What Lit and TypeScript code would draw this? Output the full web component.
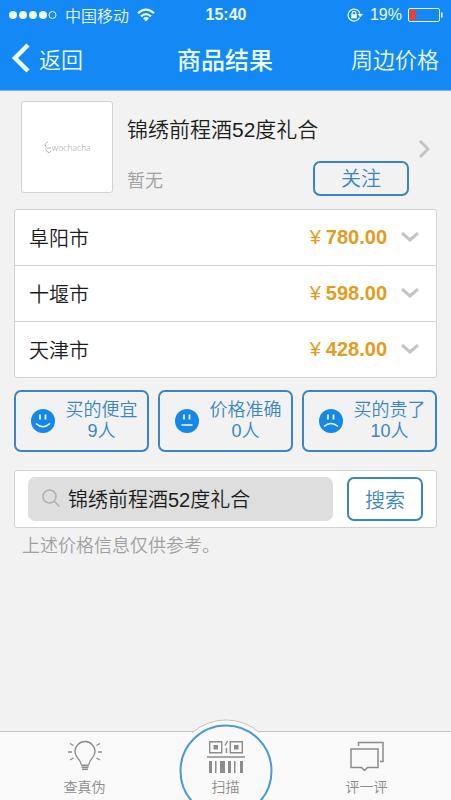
import { LitElement, html, css, svg } from "lit";
import { customElement, state } from "lit/decorators.js";

const prices = [
  { city: "阜阳市", price: "780.00" },
  { city: "十堰市", price: "598.00" },
  { city: "天津市", price: "428.00" },
];

const votes = [
  { label: "买的便宜", count: "9人", mouth: "M5 14.5Q12 21 19 14.5" },
  { label: "价格准确", count: "0人", mouth: "M6.5 16H17.5" },
  { label: "买的贵了", count: "10人", mouth: "M5 17.5Q12 11.5 19 17.5" },
];

@customElement("app-root")
export class AppRoot extends LitElement {
  @state() private query = "锦绣前程酒52度礼合";

  static styles = css`
    :host {
      display: flex;
      flex-direction: column;
      min-height: 100vh;
      overflow: hidden;
      background: #f2f2f2;
      color: #1c1c1c;
      font-family: "Liberation Sans", "Noto Sans CJK SC", sans-serif;
      font-weight: 350;
      --blue: #3a86c4;
      --line: #d2d2d2;
    }
    * { box-sizing: border-box; }
    svg { display: block; flex: none; }
    button, input {
      font: inherit;
      color: inherit;
      margin: 0;
      padding: 0;
      border: 0;
      background: none;
    }
    button { cursor: pointer; }
    h1, h2, p, ul { margin: 0; padding: 0; list-style: none; }

    .top {
      background: #1488f5;
      color: #e9fbff;
      border-bottom: 1px solid #7db4ea;
    }
    .status {
      display: grid;
      grid-template-columns: 1fr auto 1fr;
      align-items: center;
      height: 29px;
      padding: 0 8px 0 9px;
      font-size: 16px;
    }
    .group { display: flex; align-items: center; gap: 8px; }
    .group.end { justify-content: flex-end; gap: 6px; }
    .time { font-weight: 700; }
    .nav {
      display: grid;
      grid-template-columns: 1fr auto 1fr;
      align-items: center;
      height: 61px;
      padding: 0 12px 3px 11px;
    }
    .back {
      display: flex;
      align-items: center;
      gap: 9px;
      font-size: 22px;
      justify-self: start;
    }
    .title { font-size: 24px; font-weight: 500; }
    .near {
      justify-self: end;
      font-size: 22px;
      color: inherit;
      text-decoration: none;
    }

    .product {
      display: flex;
      align-items: center;
      gap: 14px;
      padding: 10px 21px 13px;
    }
    .thumb {
      flex: none;
      align-self: flex-start;
      display: flex;
      align-items: center;
      justify-content: center;
      width: 92px;
      height: 92px;
      border: 1px solid var(--line);
      border-radius: 3px;
      background: #fff;
      color: #a0a0a0;
      font-family: "Lato", sans-serif;
      font-size: 9px;
    }
    .info { flex: 1; padding-top: 14px; }
    .name { font-size: 21px; font-weight: inherit; line-height: 30px; margin-bottom: 16px; }
    .meta {
      display: flex;
      align-items: center;
      justify-content: space-between;
      color: #a0a0a0;
      font-size: 18px;
    }
    .outline {
      flex: none;
      border: 2px solid var(--blue);
      border-radius: 7px;
      color: var(--blue);
      font-size: 20px;
    }
    .follow { width: 96px; height: 35px; line-height: 30px; }
    .product .chev { margin-left: -5px; }

    main { flex: 1; padding: 0 14px; }
    .card {
      background: #fff;
      border: 1px solid var(--line);
      border-radius: 3px;
    }
    .row {
      display: flex;
      align-items: center;
      width: 100%;
      height: 55px;
      padding: 0 17px 0 14px;
      font-size: 20px;
      text-align: left;
    }
    li + li { border-top: 1px solid var(--line); }
    .city { flex: 1; }
    .price {
      display: flex;
      align-items: center;
      gap: 5px;
      margin-right: 14px;
      color: #e29c22;
    }
    .price b { font-weight: 700; }

    .votes {
      display: grid;
      grid-template-columns: repeat(3, 1fr);
      gap: 9px;
      margin: 12px 0 18px;
    }
    .vote {
      display: flex;
      align-items: center;
      gap: 10px;
      height: 62px;
      padding: 0 9px 0 15px;
      font-size: 18px;
      line-height: 21px;
    }
    .vote span { flex: 1; white-space: nowrap; }

    .search { display: flex; gap: 14px; padding: 6px 13px; }
    .field {
      flex: 1;
      display: flex;
      align-items: center;
      gap: 8px;
      min-width: 0;
      height: 44px;
      padding: 0 14px 2px;
      border-radius: 7px;
      background: #dedede;
    }
    .field input { flex: 1; min-width: 0; font-size: 20px; outline: none; }
    .go { width: 76px; height: 44px; }
    .note { padding: 4px 8px; color: #a0a0a0; font-size: 18px; line-height: 28px; }

    .tabs {
      display: grid;
      grid-template-columns: repeat(3, 1fr);
      height: 69px;
      padding: 0 14px;
      border-top: 1px solid #c4c4c4;
      background: #f9f9f9;
      color: #8c8c8c;
      font-size: 14px;
    }
    .tab {
      position: relative;
      display: flex;
      flex-direction: column;
      align-items: center;
      justify-content: space-between;
      padding: 8px 0 3px;
      line-height: 20px;
    }
    .tab > * { position: relative; }
    .tab .ring {
      position: absolute;
      top: -13px;
      left: 50%;
      margin-left: -52px;
    }
  `;

  private down() {
    return svg`<svg width="18" height="12" viewBox="0 0 18 12" fill="none" stroke="#c4c4c4" stroke-width="3"><path d="M1 1L9 8L17 1"/></svg>`;
  }

  render() {
    return html`
      <header class="top">
        <div class="status">
          <div class="group">
            <svg width="48" height="10" viewBox="0 0 48 10" fill="currentColor">
              <circle cx="4" cy="5" r="4" /><circle cx="14" cy="5" r="4" />
              <circle cx="24" cy="5" r="4" /><circle cx="34" cy="5" r="4" />
              <circle cx="43.5" cy="5" r="3.5" fill="none" stroke="currentColor" />
            </svg>
            <span>中国移动</span>
            <svg width="18" height="14" viewBox="0 0 18 14" fill="none" stroke="currentColor" stroke-width="2.2">
              <path d="M1 5.2Q9-2 17 5.2M4 8.4Q9 4 14 8.4" />
              <path d="M6 10.2Q9 8 12 10.2L9 13.5Z" fill="currentColor" stroke="none" />
            </svg>
          </div>
          <span class="time">15:40</span>
          <div class="group end">
            <svg width="17" height="14" viewBox="0 0 17 14" fill="none" stroke="currentColor" stroke-width="1.2">
              <path d="M12.6 9.5A6 6 0 1 1 13 6" />
              <path d="M10.6 6H16L13.3 9.2Z" fill="currentColor" stroke="none" />
              <rect x="4.2" y="6.2" width="5.6" height="4.2" fill="currentColor" stroke="none" />
              <path d="M5.2 6.5V5.2a1.8 1.8 0 0 1 3.6 0V6.5" />
            </svg>
            <span>19%</span>
            <svg width="35" height="14" viewBox="0 0 35 14">
              <rect x=".5" y=".5" width="31" height="13" rx="1.5" fill="none" stroke="currentColor" />
              <rect x="2" y="2" width="6" height="10" fill="#f03c3c" />
              <path d="M33 4.5h1.5v5H33z" fill="currentColor" />
            </svg>
          </div>
        </div>
        <nav class="nav">
          <button class="back">
            <svg width="19" height="30" viewBox="0 0 19 30" fill="none" stroke="currentColor" stroke-width="4.5">
              <path d="M17 2L4 15L17 28" />
            </svg>
            返回
          </button>
          <h1 class="title">商品结果</h1>
          <a class="near" href="#near">周边价格</a>
        </nav>
      </header>

      <section class="product">
        <div class="thumb">
          <svg width="8" height="13" viewBox="0 0 8 13" fill="none" stroke="#b4b4b4">
            <path d="M4 1Q0 2 1.5 5.5Q3 8 7 7M1 8Q3 9 3.5 11Q5 13 7.5 9.5" />
          </svg>
          wochacha
        </div>
        <div class="info">
          <h2 class="name">锦绣前程酒52度礼合</h2>
          <div class="meta">
            <span>暂无</span>
            <button class="outline follow">关注</button>
          </div>
        </div>
        <svg class="chev" width="12" height="18" viewBox="0 0 12 18" fill="none" stroke="#c4c4c4" stroke-width="3">
          <path d="M2 1L10 9L2 17" />
        </svg>
      </section>

      <main>
        <ul class="card">
          ${prices.map(
            (p) => html`<li>
              <button class="row">
                <span class="city">${p.city}</span>
                <span class="price"><span>¥</span><b>${p.price}</b></span>
                ${this.down()}
              </button>
            </li>`
          )}
        </ul>

        <div class="votes">
          ${votes.map(
            (v) => html`<button class="outline vote">
              <svg width="24" height="24" viewBox="0 0 24 24">
                <circle cx="12" cy="12" r="12" fill="#1488e8" />
                <path d="M9 5.500V10.500M14.500 5.500V10.500" stroke="#f2f2f2" stroke-width="1.800" />
                <path d=${v.mouth} fill="none" stroke="#f2f2f2" stroke-width="1.6" />
              </svg>
              <span>${v.label}<br />${v.count}</span>
            </button>`
          )}
        </div>

        <form class="card search" @submit=${(e: Event) => e.preventDefault()}>
          <label class="field">
            <svg width="18" height="18" viewBox="0 0 18 18" fill="none" stroke="#b0b0b0" stroke-width="1.5">
              <circle cx="7.5" cy="7.5" r="6.5" /><path d="M12 12L17.5 17.5" />
            </svg>
            <input
              type="text"
              aria-label="搜索"
              .value=${this.query}
              @input=${(e: Event) => (this.query = (e.target as HTMLInputElement).value)}
            />
          </label>
          <button class="outline go">搜索</button>
        </form>
        <p class="note">上述价格信息仅供参考。</p>
      </main>

      <nav class="tabs">
        <button class="tab">
          <svg width="34" height="32" viewBox="0 0 34 32" fill="none" stroke="#8c8c8c" stroke-width="1.4">
            <path d="M13 24.5C13 19 7 18 7 11.500A10 10 0 0 1 27 11.500C27 18 21 19 21 24.500" />
            <path d="M13 25.200H21M13.500 27.200H20.500M14 29.200H20" stroke-width="1.6" />
            <path d="M0 12H4M30 12H34M2 3.500L5.500 5.500M32 3.500L28.500 5.500M2 20L5.500 18M32 20L28.500 18" />
          </svg>
          <span>查真伪</span>
        </button>
        <button class="tab">
          <svg class="ring" width="104" height="104" viewBox="0 0 104 104">
            <path d="M18.500 13.500A51 51 0 0 1 85.500 13.500Z" fill="#f9f9f9" />
            <path d="M18.500 13.500A51 51 0 0 1 85.500 13.500" fill="none" stroke="#c4c4c4" />
            <circle cx="52" cy="52" r="45.500" fill="#f9f9f9" stroke="#4b9bd0" stroke-width="2" />
          </svg>
          <svg width="38" height="33" viewBox="0 0 38 33" fill="none" stroke="#8c8c8c" stroke-width="1.4">
            <path d="M2.700 1.700h12v11h-12zM23.300 1.700h12v11h-12zM0 17H38M20.500 1L18 5.500M19.500 8V13" />
            <path d="M6.500 5h4.500v4.500H6.500zM27 5h4.500v4.500H27zM2 21h3v12H2zM8 21h1.500v12H8zM13 21h5v12h-5zM21 21h3v12h-3zM27 21h1.500v12H27zM33 21h3v12h-3z" fill="#8c8c8c" stroke="none" />
          </svg>
          <span>扫描</span>
        </button>
        <button class="tab">
          <svg width="34" height="32" viewBox="0 0 34 32" fill="none" stroke="#8c8c8c" stroke-width="1.500">
            <path d="M1 9H28V27.500H17.500L14.500 30.500L11.500 27.500H1Z" />
            <path d="M8.500 6V2.500H33V21.500H30" />
          </svg>
          <span>评一评</span>
        </button>
      </nav>
    `;
  }
}
